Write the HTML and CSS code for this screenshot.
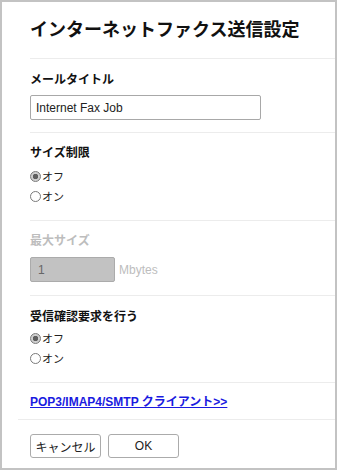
FILE: index.html
```html
<!DOCTYPE html>
<html lang="ja">
<head>
    <meta charset="UTF-8">
    <meta name="viewport" content="width=device-width, initial-scale=1.0">
    <title>インターネットファクス送信設定</title>
    <link rel="stylesheet" href="styles.css">
</head>
<body>
    <div class="frame">
        <div class="content">
            <h1 class="section title">インターネットファクス送信設定</h1>

            <div class="section mail">
                <div class="label">メールタイトル</div>
                <input type="text" class="text-input" value="Internet Fax Job">
            </div>

            <div class="section size">
                <div class="label">サイズ制限</div>
                <label class="radio-row"><input type="radio" name="sizeLimit" checked><span>オフ</span></label>
                <label class="radio-row"><input type="radio" name="sizeLimit"><span>オン</span></label>
            </div>

            <div class="section maxsize">
                <div class="label disabled">最大サイズ</div>
                <div class="unit-row">
                    <input type="text" class="text-input small" value="1" disabled>
                    <span class="unit">Mbytes</span>
                </div>
            </div>

            <div class="section receipt">
                <div class="label">受信確認要求を行う</div>
                <label class="radio-row"><input type="radio" name="receipt" checked><span>オフ</span></label>
                <label class="radio-row"><input type="radio" name="receipt"><span>オン</span></label>
            </div>

            <div class="section linkrow">
                <a href="#" class="client-link">POP3/IMAP4/SMTP クライアント&gt;&gt;</a>
            </div>

            <div class="buttons">
                <button class="btn">キャンセル</button>
                <button class="btn">OK</button>
            </div>
        </div>
    </div>
</body>
</html>
```

FILE: styles.css
```css
html, body {
    margin: 0;
    padding: 0;
    background: #fff;
}

body {
    font-family: "Liberation Sans", "Noto Sans CJK JP", sans-serif;
    color: #1a1a1a;
}

.frame {
    box-sizing: border-box;
    width: 337px;
    height: 470px;
    border: 2px solid #c3c3c3;
    background: #fff;
    overflow: hidden;
}

.content {
    margin-left: 28px;
}

.section {
    border-bottom: 1px solid #ececec;
}

.title {
    margin: 0;
    padding: 16px 0 16px 0;
    font-size: 18px;
    line-height: 24px;
    font-weight: bold;
    color: #111;
}

.label {
    font-size: 12px;
    line-height: 16px;
    font-weight: bold;
    color: #111;
}

.label.disabled {
    color: #bdbdbd;
}

.mail {
    padding: 13px 0 12px;
}

.mail .label {
    margin-bottom: 7px;
}

.text-input {
    display: block;
    box-sizing: border-box;
    width: 231px;
    height: 25px;
    margin: 0;
    padding: 0 5px;
    border: 1px solid #a8a8a8;
    border-radius: 2px;
    background: #fff;
    font-family: "Liberation Sans", sans-serif;
    font-size: 12px;
    color: #222;
}

.text-input.small {
    width: 85px;
    padding-left: 7px;
    background: #c2c2c2;
    border-color: #ababab;
    color: #666;
}

.size {
    padding: 12px 0 14px;
}

.size .label {
    margin-bottom: 5px;
}

.receipt {
    padding: 13px 0 14px;
}

.receipt .label {
    margin-bottom: 3px;
}

.radio-row {
    display: flex;
    align-items: center;
    height: 20px;
    font-size: 11px;
    color: #222;
}

.radio-row input {
    appearance: none;
    -webkit-appearance: none;
    box-sizing: border-box;
    width: 11px;
    height: 11px;
    margin: 0 1px 0 0;
    border: 1px solid #7a7a7a;
    border-radius: 50%;
    background: #fff;
}

.radio-row input:checked {
    background: radial-gradient(circle, #5f5f5f 0 2.5px, #cfcfcf 3px);
}

.maxsize {
    padding: 12px 0 13px;
}

.maxsize .label {
    margin-bottom: 8px;
}

.unit-row {
    display: flex;
    align-items: center;
}

.unit {
    margin-left: 4px;
    font-size: 12px;
    color: #bdbdbd;
}

.linkrow {
    margin-left: -12px;
    padding: 10px 0 9px 12px;
    line-height: 16px;
}

.client-link {
    font-size: 12px;
    font-weight: bold;
    color: #1a1ae0;
    text-decoration: underline;
}

.buttons {
    display: flex;
    gap: 7px;
    padding-top: 14px;
}

.btn {
    box-sizing: border-box;
    width: 71px;
    height: 24px;
    padding: 0;
    border: 1px solid #ababab;
    border-radius: 3px;
    background: #fff;
    font-family: "Liberation Sans", "Noto Sans CJK JP", sans-serif;
    font-size: 12px;
    color: #222;
}
```
